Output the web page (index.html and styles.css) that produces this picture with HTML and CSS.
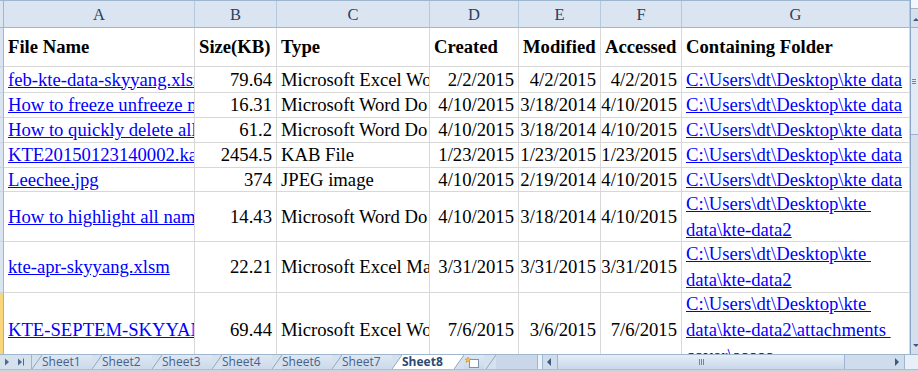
FILE: index.html
```html
<!DOCTYPE html>
<html>
<head>
<meta charset="utf-8">
<link rel="stylesheet" href="styles.css">
</head>
<body>
<div class="window">
  <div class="main">
    <div class="sheet">
      <div class="rh corner"></div>
      <div class="ch">A</div><div class="ch">B</div><div class="ch">C</div><div class="ch">D</div><div class="ch">E</div><div class="ch">F</div><div class="ch">G</div>

      <div class="rh"></div>
      <div class="c b">File Name</div><div class="c b">Size(KB)</div><div class="c b">Type</div><div class="c b">Created</div><div class="c b">Modified</div><div class="c b">Accessed</div><div class="c b">Containing Folder</div>

      <div class="rh"></div>
      <div class="c"><a>feb-kte-data-skyyang.xlsx</a></div><div class="c r">79.64</div><div class="c">Microsoft Excel Wo</div><div class="c r">2/2/2015</div><div class="c r">4/2/2015</div><div class="c r">4/2/2015</div><div class="c"><a>C:\Users\dt\Desktop\kte data</a></div>

      <div class="rh"></div>
      <div class="c"><a>How to freeze unfreeze mu</a></div><div class="c r">16.31</div><div class="c">Microsoft Word Do</div><div class="c r">4/10/2015</div><div class="c r">3/18/2014</div><div class="c r">4/10/2015</div><div class="c"><a>C:\Users\dt\Desktop\kte data</a></div>

      <div class="rh"></div>
      <div class="c"><a>How to quickly delete all</a></div><div class="c r">61.2</div><div class="c">Microsoft Word Do</div><div class="c r">4/10/2015</div><div class="c r">3/18/2014</div><div class="c r">4/10/2015</div><div class="c"><a>C:\Users\dt\Desktop\kte data</a></div>

      <div class="rh"></div>
      <div class="c"><a>KTE20150123140002.kab</a></div><div class="c r">2454.5</div><div class="c">KAB File</div><div class="c r">1/23/2015</div><div class="c r">1/23/2015</div><div class="c r">1/23/2015</div><div class="c"><a>C:\Users\dt\Desktop\kte data</a></div>

      <div class="rh"></div>
      <div class="c"><a>Leechee.jpg</a></div><div class="c r">374</div><div class="c">JPEG image</div><div class="c r">4/10/2015</div><div class="c r">2/19/2014</div><div class="c r">4/10/2015</div><div class="c"><a>C:\Users\dt\Desktop\kte data</a></div>

      <div class="rh"></div>
      <div class="c"><a>How to highlight all name</a></div><div class="c r">14.43</div><div class="c">Microsoft Word Do</div><div class="c r">4/10/2015</div><div class="c r">3/18/2014</div><div class="c r">4/10/2015</div><div class="c w"><a>C:\Users\dt\Desktop\kte&nbsp;<br>data\kte-data2</a></div>

      <div class="rh"></div>
      <div class="c"><a>kte-apr-skyyang.xlsm</a></div><div class="c r">22.21</div><div class="c">Microsoft Excel Ma</div><div class="c r">3/31/2015</div><div class="c r">3/31/2015</div><div class="c r">3/31/2015</div><div class="c w"><a>C:\Users\dt\Desktop\kte&nbsp;<br>data\kte-data2</a></div>

      <div class="rh sel"></div>
      <div class="c"><a>KTE-SEPTEM-SKYYAN</a></div><div class="c r">69.44</div><div class="c">Microsoft Excel Wo</div><div class="c r">7/6/2015</div><div class="c r">3/6/2015</div><div class="c r">7/6/2015</div><div class="c w"><a>C:\Users\dt\Desktop\kte&nbsp;<br>data\kte-data2\attachments&nbsp;<br>cover\aaaaa</a></div>
    </div>
    <div class="vscroll">
      <div class="vsplit"></div>
      <div class="varrow up"></div>
      <div class="vthumb"><span class="grip-h"></span></div>
      <div class="vtrack"></div>
      <div class="varrow down"></div>
    </div>
  </div>
  <div class="tabbar">
    <div class="nav">
      <svg width="31" height="14" viewBox="0 0 31 14"><path d="M5 3.5 L9 7 L5 10.5 Z" fill="#4a6a90"/><path d="M18 3.5 L22 7 L18 10.5 Z" fill="#4a6a90"/><rect x="23" y="3.5" width="1" height="7" fill="#4a6a90"/></svg>
    </div>
    <div class="tabs">
      <svg class="sep" width="10" height="14" viewBox="0 0 10 14"><path d="M0 14 L10 0" stroke="#8fa7c5" fill="none"/></svg>
      <div class="tab">Sheet1</div>
      <svg class="sep" width="10" height="14" viewBox="0 0 10 14"><path d="M0 14 L10 0" stroke="#8fa7c5" fill="none"/></svg>
      <div class="tab">Sheet2</div>
      <svg class="sep" width="10" height="14" viewBox="0 0 10 14"><path d="M0 14 L10 0" stroke="#8fa7c5" fill="none"/></svg>
      <div class="tab">Sheet3</div>
      <svg class="sep" width="10" height="14" viewBox="0 0 10 14"><path d="M0 14 L10 0" stroke="#8fa7c5" fill="none"/></svg>
      <div class="tab">Sheet4</div>
      <svg class="sep" width="10" height="14" viewBox="0 0 10 14"><path d="M0 14 L10 0" stroke="#8fa7c5" fill="none"/></svg>
      <div class="tab">Sheet6</div>
      <svg class="sep" width="10" height="14" viewBox="0 0 10 14"><path d="M0 14 L10 0" stroke="#8fa7c5" fill="none"/></svg>
      <div class="tab">Sheet7</div>
      <svg class="sep active-sep" width="10" height="14" viewBox="0 0 10 14"><path d="M0 14 L10 0 L10 14 Z" fill="#fff"/><path d="M0 14 L10 0" stroke="#8fa7c5" fill="none"/></svg>
      <div class="tab active">Sheet8</div>
      <svg class="sep" width="10" height="14" viewBox="0 0 10 14"><path d="M0 0 L10 0 L0 14 Z" fill="#fff"/><path d="M0 14 L10 0" stroke="#8fa7c5" fill="none"/></svg>
      <div class="tab ins">
        <svg width="16" height="13" viewBox="0 0 16 13"><rect x="5.5" y="3.5" width="9" height="8" fill="#fff" stroke="#7f93ad"/><path d="M4 1 L5 3 L7 3 L5.5 4.3 L6 6.5 L4 5.2 L2 6.5 L2.5 4.3 L1 3 L3 3 Z" fill="#f5c243" stroke="#c58a10" stroke-width="0.5"/></svg>
      </div>
      <svg class="sep" width="12" height="14" viewBox="0 0 12 14"><path d="M0 0 L12 0 L2 14 L0 14 Z" fill="#d6e1ee"/><path d="M2 14 L12 0" stroke="#8fa7c5" fill="none"/></svg>
    </div>
    <div class="splitter"></div>
    <div class="hscroll">
      <div class="harrow left"></div>
      <div class="hthumb"><span class="grip-v"></span></div>
      <div class="htrack"></div>
      <div class="harrow right"></div>
    </div>
    <div class="hbox"></div>
  </div>
  <div class="edge"></div>
</div>
</body>
</html>
```

FILE: styles.css
```css
html, body {
  margin: 0;
  padding: 0;
  background: #fff;
}
.window {
  width: 918px;
  height: 371px;
  overflow: hidden;
  display: flex;
  flex-direction: column;
  font-family: "Liberation Serif", "Times New Roman", serif;
}
.main {
  display: flex;
  height: 354px;
  flex: none;
}
.sheet {
  width: 910px;
  height: 354px;
  overflow: hidden;
  display: grid;
  grid-template-columns: 4px 191px 82px 153px 89px 82px 81px 228px;
  grid-template-rows: 27px 39px 26px 25px 25px 25px 24px 50px 51px 74px;
  border-top: 1px solid #9eb6ce;
  box-sizing: border-box;
}
.ch {
  background: #dbe5f1;
  border-right: 1px solid #b6c8dd;
  border-bottom: 1px solid #9eb6ce;
  color: #27415f;
  font-size: 16.5px;
  display: flex;
  align-items: center;
  justify-content: center;
  box-sizing: border-box;
  padding-top: 1px;
}
.rh {
  background: #dbe5f1;
  border-right: 1px solid #9eb6ce;
  border-bottom: 1px solid #c5d3e4;
  box-sizing: border-box;
}
.rh.corner {
  border-bottom: 1px solid #9eb6ce;
}
.rh.sel {
  background: #f9d57c;
  border-right-color: #e3a84a;
}
.c {
  border-right: 1px solid #d8d8d8;
  border-bottom: 1px solid #d8d8d8;
  box-sizing: border-box;
  display: flex;
  align-items: center;
  padding: 0 3px 0 4px;
  font-size: 18.67px;
  color: #000;
  white-space: nowrap;
  overflow: hidden;
  line-height: 22px;
}
.c.b {
  font-weight: bold;
}
.c.r {
  justify-content: flex-end;
  padding-right: 4px;
}
.c.w {
  white-space: normal;
  line-height: 26px;
  overflow: visible;
}
.c a {
  color: #0000ff;
  text-decoration: underline;
}
.vscroll {
  width: 8px;
  height: 354px;
  background: #d4e0ee;
  border-left: 1px solid #8aa5c6;
  box-sizing: border-box;
  display: flex;
  flex-direction: column;
}
.vsplit {
  height: 8px;
  background: #f4f7fb;
  border-bottom: 1px solid #9eb6ce;
  flex: none;
}
.varrow {
  height: 18px;
  flex: none;
  position: relative;
}
.varrow.up::after {
  content: "";
  position: absolute;
  left: 2px;
  top: 9px;
  border-left: 3px solid transparent;
  border-right: 3px solid transparent;
  border-bottom: 3px solid #3c5a80;
}
.varrow.down::after {
  content: "";
  position: absolute;
  left: 2px;
  top: 8px;
  border-left: 3px solid transparent;
  border-right: 3px solid transparent;
  border-top: 3px solid #3c5a80;
}
.vthumb {
  height: 106px;
  flex: none;
  background: #e2eaf5;
  border-top: 1px solid #9db3cf;
  border-bottom: 1px solid #9db3cf;
  display: flex;
  align-items: center;
  padding-left: 1px;
}
.grip-h {
  width: 4px;
  height: 5px;
  background: repeating-linear-gradient(to bottom, #6f87a6 0 1px, transparent 1px 2px);
}
.vtrack {
  flex: 1;
}
.tabbar {
  height: 15px;
  flex: none;
  display: flex;
  background: #c9d7e9;
  border-top: 1px solid #9eb6ce;
  box-sizing: border-box;
  font-family: "Open Sans", "DejaVu Sans", sans-serif;
  font-size: 12px;
  color: #44628a;
}
.nav {
  width: 32px;
  flex: none;
  border-right: 1px solid #9eb6ce;
  background: #d6e1ee;
  box-sizing: border-box;
}
.nav svg {
  display: block;
}
.tabs {
  display: flex;
  width: 505px;
  flex: none;
  background: #c9d7e9;
}
.sep {
  display: block;
  flex: none;
  background: #d6e1ee;
}
.sep.active-sep {
  background: #d6e1ee;
}
.tab {
  width: 50px;
  flex: none;
  line-height: 13px;
  background: linear-gradient(to bottom, #dfe8f4, #cbd9ea);
  white-space: nowrap;
}
.tab.active {
  background: #ffffff;
  color: #2d4a72;
  font-weight: bold;
  width: 52px;
}
.tab.ins {
  width: 20px;
  display: flex;
  align-items: center;
  justify-content: flex-start;
}
.tab.ins svg {
  display: block;
}
.splitter {
  width: 4px;
  flex: none;
  background: #edf2f9;
  border-left: 1px solid #9eb6ce;
  border-right: 1px solid #9eb6ce;
}
.hscroll {
  flex: 1;
  display: flex;
  background: #cfdcec;
}
.harrow {
  width: 14px;
  flex: none;
  position: relative;
}
.harrow.left::after {
  content: "";
  position: absolute;
  left: 4px;
  top: 3px;
  border-top: 4px solid transparent;
  border-bottom: 4px solid transparent;
  border-right: 4px solid #3c5a80;
}
.harrow.right::after {
  content: "";
  position: absolute;
  left: 5px;
  top: 3px;
  border-top: 4px solid transparent;
  border-bottom: 4px solid transparent;
  border-left: 4px solid #3c5a80;
}
.hthumb {
  width: 288px;
  flex: none;
  background: linear-gradient(to bottom, #e6eef8, #c8d7ea);
  border-left: 1px solid #9db3cf;
  border-right: 1px solid #9db3cf;
  box-sizing: border-box;
  display: flex;
  align-items: center;
  justify-content: center;
}
.grip-v {
  width: 5px;
  height: 6px;
  background: repeating-linear-gradient(to right, #6f87a6 0 1px, transparent 1px 2px);
}
.htrack {
  flex: 1;
}
.hbox {
  width: 13px;
  flex: none;
  background: #e9eff7;
  border-left: 1px solid #9eb6ce;
}
.edge {
  flex: 1;
  background: linear-gradient(to bottom, #a8b4c4, #d6dbe2);
}
```
